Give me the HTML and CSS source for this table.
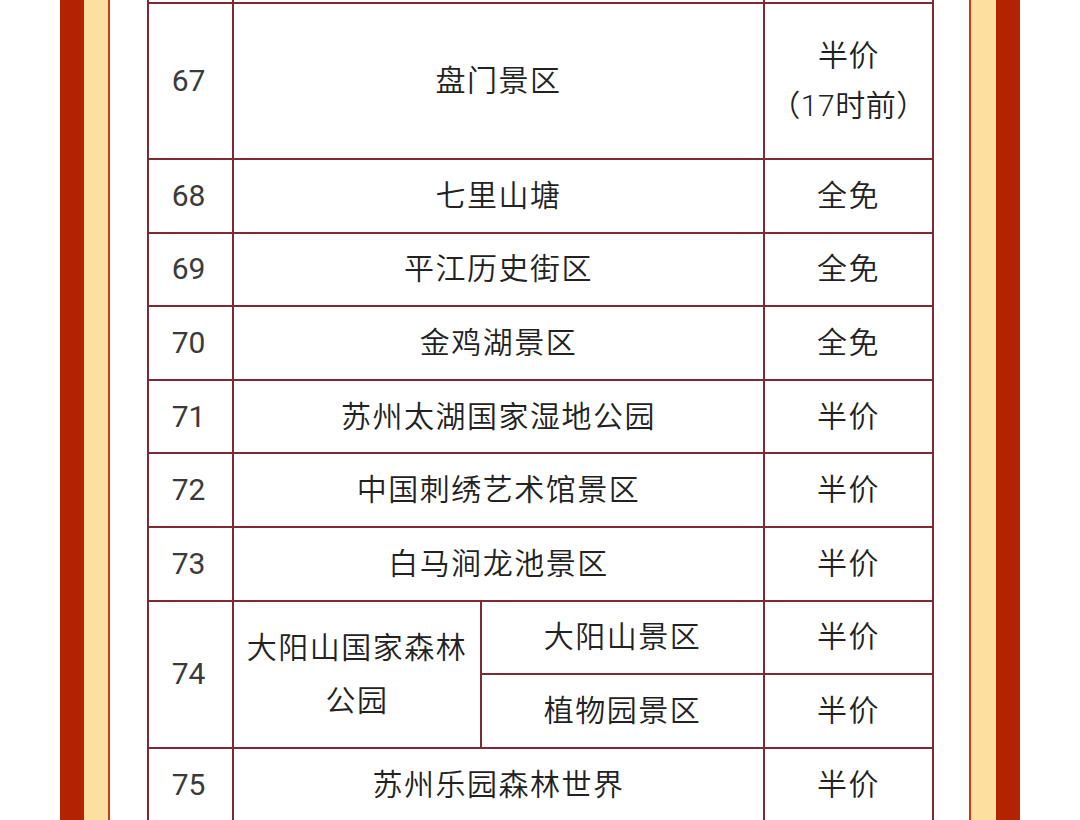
FILE: index.html
```html
<!DOCTYPE html>
<html lang="zh">
<head>
<meta charset="utf-8">
<link rel="stylesheet" href="styles.css">
</head>
<body>
<div class="page">
  <div class="frame-left"><span class="band"></span><span class="cream"></span><span class="rule"></span></div>
  <main class="content">
    <table class="list">
      <colgroup><col class="c-no"><col class="c-a"><col class="c-b"><col class="c-p"></colgroup>
      <tr class="r-cut"><td></td><td colspan="2"></td><td></td></tr>
      <tr class="r-tall"><td class="no">67</td><td colspan="2">盘门景区</td><td class="price">半价<br>（17时前）</td></tr>
      <tr class="r"><td class="no">68</td><td colspan="2">七里山塘</td><td>全免</td></tr>
      <tr class="r"><td class="no">69</td><td colspan="2">平江历史街区</td><td>全免</td></tr>
      <tr class="r"><td class="no">70</td><td colspan="2">金鸡湖景区</td><td>全免</td></tr>
      <tr class="r"><td class="no">71</td><td colspan="2">苏州太湖国家湿地公园</td><td>半价</td></tr>
      <tr class="r"><td class="no">72</td><td colspan="2">中国刺绣艺术馆景区</td><td>半价</td></tr>
      <tr class="r"><td class="no">73</td><td colspan="2">白马涧龙池景区</td><td>半价</td></tr>
      <tr class="r"><td class="no" rowspan="2">74</td><td rowspan="2" class="park">大阳山国家森林公园</td><td>大阳山景区</td><td>半价</td></tr>
      <tr class="r"><td>植物园景区</td><td>半价</td></tr>
      <tr class="r"><td class="no">75</td><td colspan="2">苏州乐园森林世界</td><td>半价</td></tr>
    </table>
  </main>
  <div class="frame-right"><span class="rule"></span><span class="cream"></span><span class="band"></span></div>
</div>
</body>
</html>
```

FILE: styles.css
```css
html, body {
  margin: 0;
  padding: 0;
  background: #ffffff;
}
.page {
  display: flex;
  height: 820px;
  overflow: hidden;
  padding: 0 60px;
}
.frame-left, .frame-right {
  display: flex;
  flex: none;
}
.band {
  width: 24px;
  background: #b42301;
}
.cream {
  width: 24px;
  background: #fde0a0;
}
.frame-right .cream {
  width: 25px;
}
.rule {
  width: 2px;
  background: #cc3a1e;
}
.content {
  flex: 1;
  padding: 0 37px;
  overflow: hidden;
}
.list {
  width: 785px;
  table-layout: fixed;
  border-collapse: collapse;
  font-family: Roboto, "Noto Sans CJK SC", sans-serif;
  font-size: 30px;
  font-weight: 350;
  letter-spacing: 1.5px;
  color: #222222;
  text-align: center;
}
.c-no { width: 85px; }
.c-a { width: 248px; }
.c-b { width: 283px; }
.c-p { width: 169px; }
.list td {
  border: 2px solid #7e2a35;
  padding: 0 8px;
  vertical-align: middle;
  line-height: 50px;
}
.list td.no {
  color: #3a3a3a;
  font-weight: 400;
  letter-spacing: 0;
  padding: 0 4px 0 0;
}
.r-cut td {
  border-top: none;
  height: 2px;
  padding: 0;
  line-height: 0;
}
.r-tall td {
  height: 154px;
}
.r td {
  height: 71.6px;
}
.park {
  line-height: 53px !important;
  padding: 0 6px !important;
}
.price {
  padding: 0 !important;
  letter-spacing: 0.5px;
}
```
